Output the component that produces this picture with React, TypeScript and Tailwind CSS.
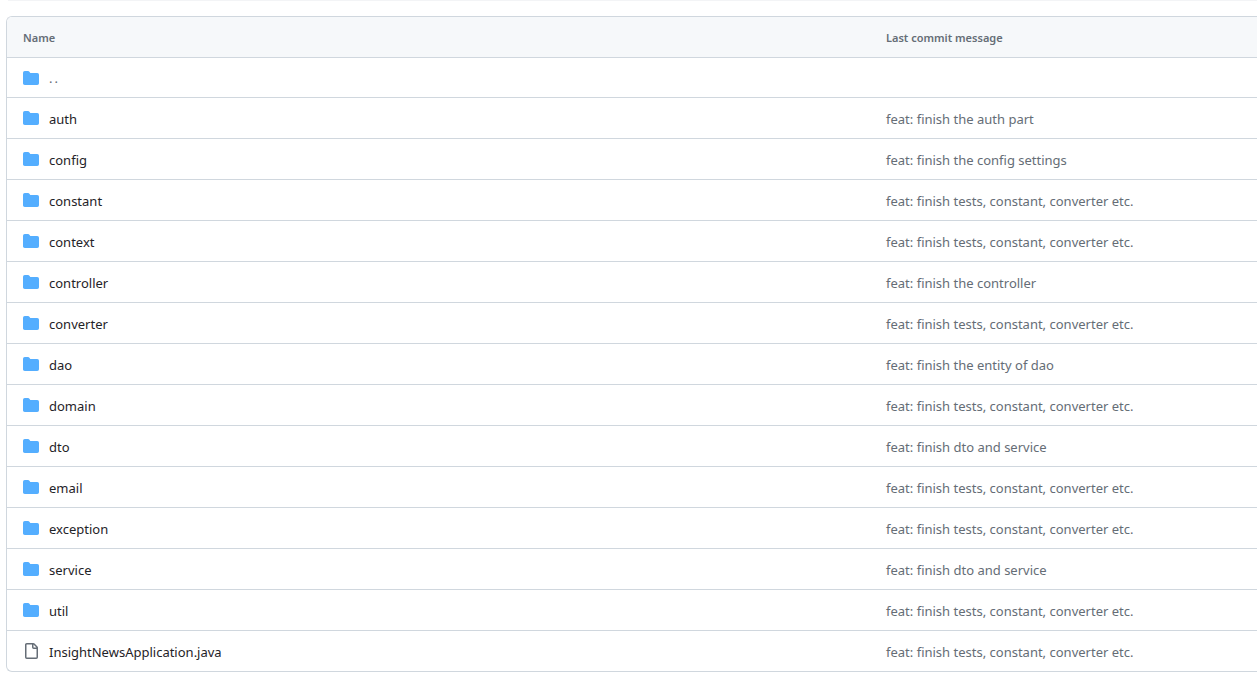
import React from 'react';

interface Entry {
  name: string;
  message: string;
  type: 'dir' | 'file';
}

const entries: Entry[] = [
  { name: 'auth', message: 'feat: finish the auth part', type: 'dir' },
  { name: 'config', message: 'feat: finish the config settings', type: 'dir' },
  { name: 'constant', message: 'feat: finish tests, constant, converter etc.', type: 'dir' },
  { name: 'context', message: 'feat: finish tests, constant, converter etc.', type: 'dir' },
  { name: 'controller', message: 'feat: finish the controller', type: 'dir' },
  { name: 'converter', message: 'feat: finish tests, constant, converter etc.', type: 'dir' },
  { name: 'dao', message: 'feat: finish the entity of dao', type: 'dir' },
  { name: 'domain', message: 'feat: finish tests, constant, converter etc.', type: 'dir' },
  { name: 'dto', message: 'feat: finish dto and service', type: 'dir' },
  { name: 'email', message: 'feat: finish tests, constant, converter etc.', type: 'dir' },
  { name: 'exception', message: 'feat: finish tests, constant, converter etc.', type: 'dir' },
  { name: 'service', message: 'feat: finish dto and service', type: 'dir' },
  { name: 'util', message: 'feat: finish tests, constant, converter etc.', type: 'dir' },
  { name: 'InsightNewsApplication.java', message: 'feat: finish tests, constant, converter etc.', type: 'file' },
];

const FolderIcon: React.FC = () => (
  <svg viewBox="0 0 16 16" className="mr-2.5 size-4 shrink-0 fill-[#54aeff]" aria-hidden="true">
    <path d="M1.75 1A1.75 1.75 0 0 0 0 2.75v10.5C0 14.216.784 15 1.75 15h12.5A1.75 1.75 0 0 0 16 13.25v-8.5A1.75 1.75 0 0 0 14.25 3H7.5a.25.25 0 0 1-.2-.1l-.9-1.2C6.07 1.26 5.55 1 5 1H1.75Z" />
  </svg>
);

const FileIcon: React.FC = () => (
  <svg viewBox="0 0 16 16" className="mr-2.5 size-4 shrink-0 fill-[#656d76]" aria-hidden="true">
    <path d="M2 1.75C2 .784 2.784 0 3.75 0h6.586c.464 0 .909.184 1.237.513l2.914 2.914c.329.328.513.773.513 1.237v9.586A1.75 1.75 0 0 1 13.25 16h-9.5A1.75 1.75 0 0 1 2 14.25Zm1.75-.25a.25.25 0 0 0-.25.25v12.5c0 .138.112.25.25.25h9.5a.25.25 0 0 0 .25-.25V6h-2.75A1.75 1.75 0 0 1 9 4.25V1.5Zm6.75.062V4.25c0 .138.112.25.25.25h2.688l-.011-.013-2.914-2.914-.013-.011Z" />
  </svg>
);

const EntryRow: React.FC<{ entry: Entry }> = ({ entry }) => (
  <div className="flex h-[41px] items-center border-t border-[#d0d7de] pl-4">
    <div className="flex w-[863px] shrink-0 items-center">
      {entry.type === 'dir' ? <FolderIcon /> : <FileIcon />}
      <span className="pt-[3px] text-[#1f2328]">{entry.name}</span>
    </div>
    <span className="whitespace-nowrap pt-[3px] text-[#656d76]">{entry.message}</span>
  </div>
);

const App: React.FC = () => {
  return (
    <div className="h-[691px] overflow-hidden bg-white font-['Noto_Sans',sans-serif] text-[13px]">
      <div className="ml-2 h-px bg-[#f3f4f6]" />
      <div className="ml-1.5 mt-[15px] overflow-hidden rounded-l-md border border-r-0 border-[#d0d7de]">
        <div className="flex h-10 items-center bg-[#f6f8fa] pl-4 pt-0.5 text-[11px] font-semibold text-[#656d76]">
          <div className="w-[863px] shrink-0">Name</div>
          <div className="whitespace-nowrap">Last commit message</div>
        </div>
        <div className="flex h-10 items-center border-t border-[#d0d7de] pl-4">
          <FolderIcon />
          <span className="pt-0.5 tracking-[2px] text-[#656d76]">..</span>
        </div>
        {entries.map((entry) => (
          <EntryRow key={entry.name} entry={entry} />
        ))}
      </div>
    </div>
  );
};

export default App;
